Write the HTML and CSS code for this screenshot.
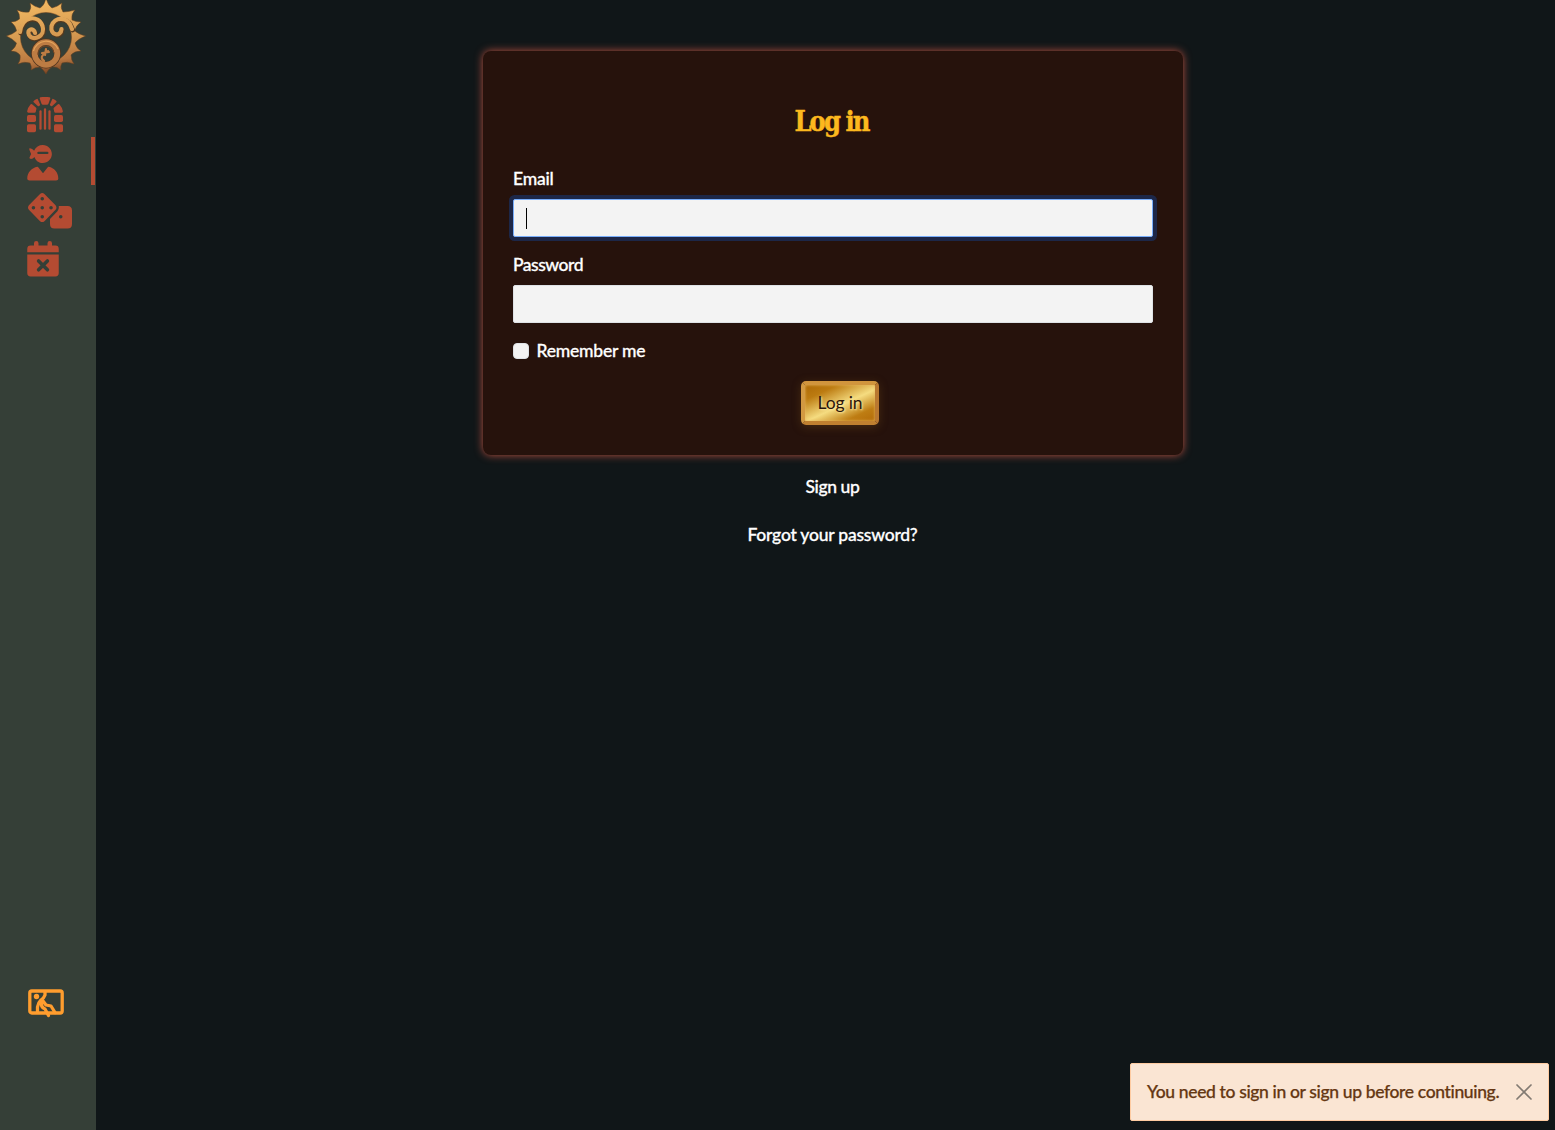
FILE: index.html
```html
<!DOCTYPE html>
<html lang="en">
<head>
<meta charset="utf-8">
<title>Log in</title>
<link rel="stylesheet" href="styles.css">
</head>
<body>
<aside class="sidebar">
  <a class="logo" href="#" aria-label="Home">
    <svg width="96" height="78" viewBox="0 0 96 78">
      <defs>
        <linearGradient id="gold" gradientUnits="userSpaceOnUse" x1="40" y1="0" x2="50" y2="76">
          <stop offset="0" stop-color="#f3b962"/><stop offset=".5" stop-color="#d49850"/><stop offset=".8" stop-color="#b87740"/><stop offset="1" stop-color="#6e391e"/>
        </linearGradient>
      </defs>
      <path fill="url(#gold)" stroke="#6b431f" stroke-width=".5" d="M46 -3Q47.500 5 52 8Q57 7 62 3Q60 8 63 12Q68 12 75 10Q71 14 72 20Q76 22 81 22Q75 26 75 31Q78 34 85.500 36Q78 39 75 43Q76 48 81 51Q74 51 71 55Q71 60 74 64Q67 61 62 63Q60 67 61 70Q56 66 52 67Q48 69 46 74Q43 69 40 67Q35 67 31 70Q32 67 30 63Q24 61 18 64Q21 60 20 55Q17 51 11 51Q16 47 16.500 43Q13 39 6.500 36Q13 34 16.500 31Q16 26 11 22Q16 22 19.500 19Q20 14 17 10Q23 13 29 12Q32 8 30 3Q35 7 40 8Q45 5 46 -3ZM46 12.500A25.500 25 0 0 0 46 62.500A25.500 25 0 0 0 46 12.500Z" fill-rule="evenodd"/>
      <g fill="none" stroke="#54391f" stroke-width="4.800" stroke-linecap="round" transform="translate(.7 1)">
        <path d="M20 32C22 16 38 14 42.500 26C46 36 33 42 29 35C26 29 34 27 35 33M72 29C68 15 54 17 51.500 26C50 36 61 37 61.500 29"/>
      </g>
      <path fill="none" stroke="url(#gold)" stroke-width="4.200" stroke-linecap="round" d="M20 32C22 16 38 14 42.500 26C46 36 33 42 29 35C26 29 34 27 35 33M72 29C68 15 54 17 51.500 26C50 36 61 37 61.500 29"/>
      <circle cx="46" cy="53.500" r="15" fill="#51351f"/>
      <circle cx="46" cy="53.500" r="8" fill="#353f37"/>
      <g fill="none" stroke="#bd7c43" stroke-linecap="round">
        <circle cx="46" cy="53.500" r="11.300" stroke-width="5.800"/>
        <path stroke-width="2.200" d="M44 61Q40 58 43 55L48 51M46 49L45 55M42 53L49 52"/>
      </g>
      <path fill="none" stroke="#784521" stroke-width=".9" d="M38 55A8 8 0 0 1 54 53"/>
      <path fill="none" stroke="#e5a35a" stroke-width="1.200" d="M33.500 51A13 13 0 0 1 58 49"/>
    </svg>
  </a>
  <nav class="menu">
    <a class="item" href="#" aria-label="Dungeon">
      <svg width="36" height="36" viewBox="0 0 512 512"><path d="M193 4Q256-8 319 4Q336 8 330 26L305 95Q300 110 284 110H228Q212 110 207 95L182 26Q176 8 193 4ZM138 27Q150 21 155 36L185 103Q189 114 181 120L171 127Q159 135 149 124L96 76Q85 65 98 55Q117 37 138 27ZM374 27Q362 21 357 36L327 103Q323 114 331 120L341 127Q353 135 363 124L416 76Q427 65 414 55Q395 37 374 27ZM49 107Q59 93 72 104L126 151Q137 160 133 173Q128 186 125 208Q122 224 107 224H20Q0 224 2 204Q9 152 49 107ZM463 107Q453 93 440 104L386 151Q375 160 379 173Q384 186 387 208Q390 224 405 224H492Q512 224 510 204Q503 152 463 107Z"/><rect y="256" width="128" height="100" rx="24"/><rect x="384" y="256" width="128" height="100" rx="24"/><rect y="388" width="128" height="112" rx="24"/><rect x="384" y="388" width="128" height="112" rx="24"/><rect x="176" y="190" width="32" height="276" rx="16"/><rect x="240" y="160" width="32" height="306" rx="16"/><rect x="304" y="190" width="32" height="276" rx="16"/></svg>
    </a>
    <a class="item active" href="#" aria-label="Account">
      <svg width="32" height="36" viewBox="0 0 448 512"><path d="M97 82C121 27 165 0 222 0C292 0 350 57 350 128S292 256 222 256C163 256 119 223 103 170C86 190 64 202 44 197Q25 190 33 174L55 128L31 72Q24 50 34 47C59 48 79 60 97 82ZM160 96Q142 98 142 112T160 128H286Q302 128 302 112T286 96ZM143 311Q153 310 159 319L224 402L289 319Q295 310 305 311C382 329 442 387 442 480Q442 506 410 506H32Q0 506 0 480C0 387 66 329 143 311Z" fill-rule="evenodd"/></svg>
    </a>
    <a class="item dice" href="#" aria-label="Dice">
      <svg width="44" height="36" viewBox="0 0 640 512" preserveAspectRatio="none"><path fill-rule="evenodd" d="M175 13Q207-13 239 13L401 175Q427 207 401 239L239 401Q207 427 175 401L13 239Q-13 207 13 175ZM207 56a26 26 0 1 0 0 52a26 26 0 1 0 0-52M79 184a26 26 0 1 0 0 52a26 26 0 1 0 0-52M207 184a26 26 0 1 0 0 52a26 26 0 1 0 0-52M335 184a26 26 0 1 0 0 52a26 26 0 1 0 0-52M207 312a26 26 0 1 0 0 52a26 26 0 1 0 0-52M447 184H576Q640 184 640 248V440Q640 504 576 504H384Q320 504 320 440V370L428 260Q455 230 447 184ZM476 312a26 26 0 1 0 0 52a26 26 0 1 0 0-52"/></svg>
    </a>
    <a class="item" href="#" aria-label="Calendar">
      <svg width="32" height="36" viewBox="0 0 448 512"><path d="M96 64V32a32 32 0 0 1 64 0V64H288V32a32 32 0 0 1 64 0V64H400Q448 64 448 112V160H0V112Q0 64 48 64ZM0 192H448V456Q448 504 400 504H48Q0 504 0 456Z"/><path class="cross" d="M161 284L287 410M287 284L161 410"/></svg>
    </a>
  </nav>
  <a class="scene" href="#" aria-label="Leave the frame">
    <svg width="36" height="29" viewBox="0 0 36 29"><rect x="1.800" y="2" width="32.400" height="22" rx="2"/><circle cx="8.500" cy="7.500" r="2.700"/><path d="M17 3V6Q16 9 13 11Q10 14 9.500 18V23M14 12Q12 18 17 20L20.500 26.500M15 12L18 16L23 17L27 23.500"/></svg>
  </a>
</aside>
<main class="content">
  <form class="card">
    <h1>Log in</h1>
    <label class="label email" for="email"><span>Email</span></label>
    <div class="field focused" id="email"><i class="caret"></i></div>
    <label class="label pass" for="password"><span>Password</span></label>
    <input class="field" id="password" type="password">
    <label class="remember"><i class="checkbox"></i><span>Remember me</span></label>
    <button class="submit" type="button"><span>Log in</span></button>
  </form>
  <a class="link signup" href="#">Sign up</a>
  <a class="link forgot" href="#">Forgot your password?</a>
</main>
<div class="toast" role="alert">
  <span>You need to sign in or sign up before continuing.</span>
  <svg width="16" height="16" viewBox="0 0 16 16"><path d="M1 1L15 15M15 1L1 15"/></svg>
</div>
</body>
</html>
```
FILE: styles.css
```css
* { box-sizing: border-box; }
body { margin: 0; height: 1130px; display: flex; overflow: hidden; background: #101618; color: #fff; font: 500 17.5px/24px Lato, sans-serif; font-variant-ligatures: none; }
a { color: inherit; text-decoration: none; }
svg { display: block; }
.sidebar { width: 96px; height: 1130px; flex: none; display: flex; flex-direction: column; background: #353f37; }
.logo { height: 89px; }
.menu { display: flex; flex-direction: column; }
.item { height: 48px; padding: 7.500px 0 0 27px; fill: #b44b32; }
.item.dice { padding-left: 28px; }
.active { border-right: 4px solid #b44b32; margin-right: 1px; }
.cross { fill: none; stroke: #353f37; stroke-width: 50; stroke-linecap: round; }
.scene { margin: auto 0 112px 28px; }
.scene rect, .scene path { fill: none; stroke: #ff9d2e; stroke-width: 3.3; stroke-linecap: round; stroke-linejoin: round; }
.scene circle { fill: #ff9d2e; }
.content { flex: 1; display: flex; flex-direction: column; align-items: center; padding: 51px 0 0 15px; }
.card { width: 700px; height: 404px; display: flex; flex-direction: column; padding: 53px 30px 30px; border-radius: 8px; background: #26120c; box-shadow: 0 0 8px #b9503f; }
h1 { margin: 0 0 27px; padding-right: 3px; text-align: center; color: #fcb81e; font: bold 27px/36px "DejaVu Serif Condensed", "DejaVu Serif", serif; font-stretch: condensed; letter-spacing: -1.9px; -webkit-text-stroke: .4px #fcb81e; }
.label { height: 24px; margin-bottom: 8px; letter-spacing: -.48px; -webkit-text-stroke: .3px; }
.email { letter-spacing: -.2px; }
.field { display: block; width: 100%; height: 38px; padding: 8px 12px; border: 1px solid #dee2e6; border-radius: 2px; background: #f3f3f3; margin-bottom: 16px; outline: 0; }
.focused { border-color: #78adfb; box-shadow: 0 0 0 4px #1d2748; }
.caret { display: block; width: 1px; height: 21px; background: #000; }
.remember { display: flex; align-items: center; gap: 7.500px; height: 24px; letter-spacing: -.22px; -webkit-text-stroke: .3px; }
.checkbox { width: 16px; height: 16px; background: #f3f3f3; border: 1px solid #dee2e6; border-radius: 4px; }
.submit { width: 78px; height: 44px; margin: 18px 0 0 288px; padding: 0; border: 4px solid; border-color: #d1953d #b97830 #c08030 #d29942; border-radius: 5px; color: #2b160c; font: 17.5px/36px Lato, sans-serif; letter-spacing: -.15px; background: linear-gradient(155deg, #ad6905 0, #bc7b11 22%, #f5dc80 54%, #be7d13 80%, #b36b08); box-shadow: 0 2px 10px #79501a66, inset 0 0 3px #e7b75d; text-shadow: 1px 1px 2px #ffe99f; }
.link { height: 24px; margin-top: 20px; margin-right: 1px; letter-spacing: -.22px; -webkit-text-stroke: .3px; }
.signup { letter-spacing: -.4px; }
.forgot { margin-top: 24px; }
.toast { position: absolute; right: 6px; bottom: 9px; width: 419px; height: 58px; display: flex; align-items: center; justify-content: space-between; padding: 0 16px; border: 1px solid #fecba1; border-radius: 2px; background: #fae5d3; color: #653712; letter-spacing: -.36px; -webkit-text-stroke: .25px; white-space: nowrap; }
.toast svg { fill: none; stroke: #827a72; stroke-width: 1.7; stroke-linecap: round; }
```
